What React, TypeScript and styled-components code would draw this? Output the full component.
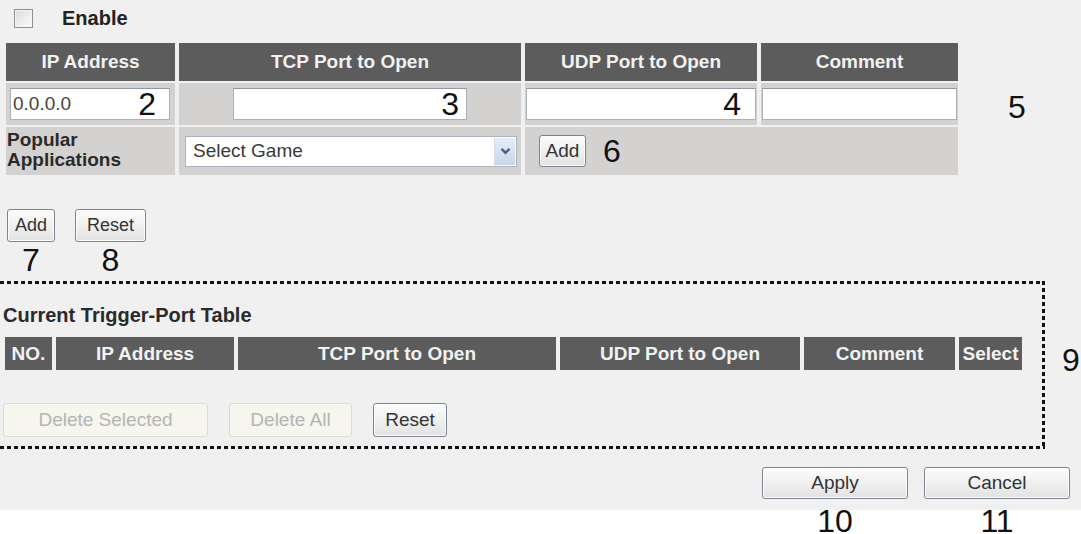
import React from 'react';
import styled, { createGlobalStyle } from 'styled-components';

const GlobalStyle = createGlobalStyle`
  html, body {
    margin: 0;
    padding: 0;
  }
  body {
    background: #fff;
    font-family: "Liberation Sans", Arial, sans-serif;
    color: #222;
  }
`;

const Page = styled.div`
  width: 1081px;
  height: 534px;
  overflow: hidden;
  display: flex;
  flex-direction: column;
  background: linear-gradient(#f0f0f0 0 510px, #fff 510px);

  & > * {
    flex-shrink: 0;
  }
`;

const Annotation = styled.span<{ $lh?: number }>`
  font-family: "Liberation Sans", Arial, sans-serif;
  font-size: 32px;
  line-height: ${(p) => p.$lh ?? 32}px;
  color: #111;
`;

const EnableRow = styled.label`
  display: flex;
  align-items: center;
  gap: 29px;
  height: 37px;
  margin-bottom: 6px;
  padding-left: 14px;
  font-size: 20px;
  font-weight: bold;
  color: #222;
`;

const CheckBox = styled.span`
  width: 19px;
  height: 19px;
  box-sizing: border-box;
  border: 1px solid #8b9098;
  background: linear-gradient(135deg, #d9dde2, #fbfbfb);
  box-shadow: inset 0 0 0 1px #f4f4f4;
`;

const FormArea = styled.div`
  display: flex;
  align-items: flex-start;
  padding-left: 6px;
`;

const EntryGrid = styled.div`
  display: grid;
  grid-template-columns: 169px 342px 232px 197px;
  grid-template-rows: 38px 42px 48px;
  column-gap: 4px;
  row-gap: 2px;
`;

const HeadCell = styled.div`
  display: flex;
  align-items: center;
  justify-content: center;
  background: #5c5c5c;
  color: #f2f2f2;
  font-size: 19px;
  font-weight: bold;
  white-space: nowrap;
  overflow: hidden;
`;

const Cell = styled.div<{ $justify?: string; $pad?: string; $span?: number; $align?: string }>`
  grid-column: span ${(p) => p.$span ?? 1};
  display: flex;
  align-items: ${(p) => p.$align ?? 'center'};
  justify-content: ${(p) => p.$justify ?? 'flex-start'};
  padding: ${(p) => p.$pad ?? '0'};
  background: #d4d2d0;
  box-sizing: border-box;
`;

const InputWrap = styled.div<{ $w: number }>`
  position: relative;
  width: ${(p) => p.$w}px;
  height: 32px;
`;

const TextInput = styled.input`
  width: 100%;
  height: 100%;
  box-sizing: border-box;
  margin: 0;
  padding: 0 2px;
  border: 1px solid #a9b0b9;
  border-top-color: #8f98a3;
  border-radius: 1px;
  background: #fff;
  font-family: "Liberation Sans", Arial, sans-serif;
  font-size: 19px;
  color: #444;
  outline: none;
`;

const OverNumber = styled(Annotation)<{ $right: number }>`
  position: absolute;
  top: 50%;
  right: ${(p) => p.$right}px;
  transform: translateY(-50%);
  pointer-events: none;
`;

const RowLabel = styled.div`
  font-size: 19px;
  font-weight: bold;
  line-height: 20px;
  color: #2a2a2a;
`;

const SelectBox = styled.div`
  width: 332px;
  height: 31px;
  box-sizing: border-box;
  display: flex;
  align-items: center;
  justify-content: space-between;
  padding-left: 7px;
  border: 1px solid #aab4c0;
  background: #fff;
  font-size: 19px;
  color: #3a3a3a;
`;

const SelectArrow = styled.span`
  align-self: stretch;
  width: 20px;
  margin: 1px;
  display: flex;
  align-items: center;
  justify-content: center;
  background: linear-gradient(#e6edf7, #c9d6e8);
  border-left: 1px solid #d5dde9;
`;

const Button = styled.button<{ $w: number; $h?: number; $size?: number }>`
  width: ${(p) => p.$w}px;
  height: ${(p) => p.$h ?? 33}px;
  box-sizing: border-box;
  margin: 0;
  padding: 0;
  border: 1px solid #7b8591;
  border-radius: 3px;
  background: linear-gradient(#fcfcfc, #f0f0f0 50%, #e2e2e2);
  box-shadow: inset 0 0 0 1px #fdfdfd;
  font-family: "Liberation Sans", Arial, sans-serif;
  font-size: ${(p) => p.$size ?? 19}px;
  color: #333;

  &:disabled {
    border-color: #dedad0;
    background: #f6f5ee;
    box-shadow: none;
    color: #b3b5b5;
  }
`;

const AddCell = styled(Cell)`
  gap: 17px;
`;

const SideNumber = styled(Annotation)<{ $top: number; $left: number }>`
  margin-top: ${(p) => p.$top}px;
  margin-left: ${(p) => p.$left}px;
`;

const ActionRow = styled.div`
  display: flex;
  gap: 20px;
  margin-top: 34px;
  padding-left: 7px;
`;

const ActionItem = styled.div`
  display: flex;
  flex-direction: column;
  align-items: center;
`;

const ItemNumber = styled(Annotation)<{ $gap?: number }>`
  margin-top: ${(p) => p.$gap ?? 2}px;
`;

const TriggerRow = styled.div`
  display: flex;
  align-items: flex-start;
  margin-top: 5px;
`;

const DottedBox = styled.section`
  width: 1045px;
  height: 168px;
  box-sizing: border-box;
  padding: 24px 0 0 0;
  background:
    linear-gradient(to right, #111 4px, transparent 4px) 0 0 / 7px 3px repeat-x,
    linear-gradient(to right, #111 4px, transparent 4px) 0 100% / 7px 3px repeat-x,
    linear-gradient(to bottom, #111 4px, transparent 4px) 100% 0 / 3px 7px repeat-y;
`;

const TableTitle = styled.h3`
  margin: 0 0 12px 3px;
  font-size: 20px;
  line-height: 20px;
  font-weight: bold;
  color: #2a2a2a;
`;

const TriggerHead = styled.div`
  display: grid;
  grid-template-columns: 47px 178px 318px 240px 151px 63px;
  grid-template-rows: 33px;
  column-gap: 4px;
  margin-left: 5px;
  width: fit-content;
`;

const TableButtons = styled.div`
  display: flex;
  gap: 21px;
  margin: 33px 0 0 3px;
`;

const SubmitRow = styled.div`
  display: flex;
  justify-content: flex-end;
  gap: 16px;
  margin-top: 18px;
  padding-right: 11px;
`;

const Chevron = () => (
  <svg width="11" height="8" viewBox="0 0 11 8">
    <path d="M1.5 1.8 L5.5 5.8 L9.5 1.8" fill="none" stroke="#4a5f86" strokeWidth="2.4" />
  </svg>
);

export default function App() {
  return (
    <>
      <GlobalStyle />
      <Page>
        <EnableRow>
          <CheckBox />
          Enable
        </EnableRow>

        <FormArea>
          <EntryGrid>
            <HeadCell>IP Address</HeadCell>
            <HeadCell>TCP Port to Open</HeadCell>
            <HeadCell>UDP Port to Open</HeadCell>
            <HeadCell>Comment</HeadCell>

            <Cell $pad="0 0 0 4px">
              <InputWrap $w={160}>
                <TextInput defaultValue="0.0.0.0" />
                <OverNumber $right={14}>2</OverNumber>
              </InputWrap>
            </Cell>
            <Cell $justify="center">
              <InputWrap $w={234}>
                <TextInput />
                <OverNumber $right={8}>3</OverNumber>
              </InputWrap>
            </Cell>
            <Cell $justify="center">
              <InputWrap $w={230}>
                <TextInput />
                <OverNumber $right={15}>4</OverNumber>
              </InputWrap>
            </Cell>
            <Cell $justify="center">
              <InputWrap $w={195}>
                <TextInput />
              </InputWrap>
            </Cell>

            <Cell $align="flex-start" $pad="3px 0 0 1px">
              <RowLabel>
                Popular
                <br />
                Applications
              </RowLabel>
            </Cell>
            <Cell $pad="0 0 0 6px">
              <SelectBox>
                Select Game
                <SelectArrow>
                  <Chevron />
                </SelectArrow>
              </SelectBox>
            </Cell>
            <AddCell $span={2} $pad="0 0 0 14px">
              <Button $w={47} $h={32}>Add</Button>
              <Annotation>6</Annotation>
            </AddCell>
          </EntryGrid>
          <SideNumber $top={48} $left={50}>5</SideNumber>
        </FormArea>

        <ActionRow>
          <ActionItem>
            <Button $w={48} $size={18}>Add</Button>
            <ItemNumber>7</ItemNumber>
          </ActionItem>
          <ActionItem>
            <Button $w={71} $size={18}>Reset</Button>
            <ItemNumber>8</ItemNumber>
          </ActionItem>
        </ActionRow>

        <TriggerRow>
          <DottedBox>
            <TableTitle>Current Trigger-Port Table</TableTitle>
            <TriggerHead>
              <HeadCell>NO.</HeadCell>
              <HeadCell>IP Address</HeadCell>
              <HeadCell>TCP Port to Open</HeadCell>
              <HeadCell>UDP Port to Open</HeadCell>
              <HeadCell>Comment</HeadCell>
              <HeadCell>Select</HeadCell>
            </TriggerHead>
            <TableButtons>
              <Button $w={205} $h={34} disabled>Delete Selected</Button>
              <Button $w={123} $h={34} disabled>Delete All</Button>
              <Button $w={74} $h={34}>Reset</Button>
            </TableButtons>
          </DottedBox>
          <SideNumber $top={63} $left={17}>9</SideNumber>
        </TriggerRow>

        <SubmitRow>
          <ActionItem>
            <Button $w={146} $h={32}>Apply</Button>
            <ItemNumber $gap={11} $lh={22}>10</ItemNumber>
          </ActionItem>
          <ActionItem>
            <Button $w={146} $h={32}>Cancel</Button>
            <ItemNumber $gap={11} $lh={22}>11</ItemNumber>
          </ActionItem>
        </SubmitRow>
      </Page>
    </>
  );
}
